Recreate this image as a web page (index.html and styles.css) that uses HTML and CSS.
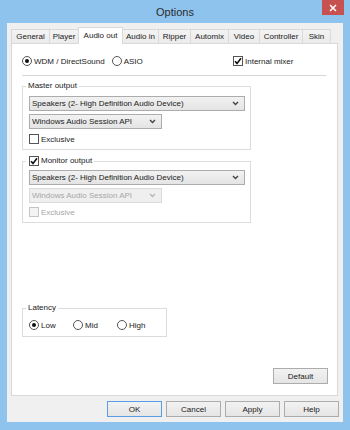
FILE: index.html
```html
<!DOCTYPE html>
<html lang="en">
<head>
    <meta charset="UTF-8">
    <title>Options</title>
    <link rel="stylesheet" href="styles.css">
</head>
<body>
<div class="window">
    <div class="titlebar">
        <span></span>
        <div class="title">Options</div>
        <div class="close">
            <svg width="8" height="8" viewBox="0 0 8 8"><path d="M1 1L7 7M7 1L1 7" stroke="#fff" stroke-width="1.5"/></svg>
        </div>
    </div>
    <div class="client">
        <div class="tabs">
            <div class="tab">General</div>
            <div class="tab">Player</div>
            <div class="tab active">Audio out</div>
            <div class="tab">Audio in</div>
            <div class="tab">Ripper</div>
            <div class="tab">Automix</div>
            <div class="tab">Video</div>
            <div class="tab">Controller</div>
            <div class="tab">Skin</div>
        </div>
        <div class="panel">
            <div class="toprow">
                <label class="opt"><span class="radio on"></span>WDM / DirectSound</label>
                <label class="opt asio"><span class="radio"></span>ASIO</label>
                <label class="opt mixer"><span class="check"><svg width="8" height="8" viewBox="0 0 8 8"><path d="M1 4.2L3 6.4L7 1.2" fill="none" stroke="#111" stroke-width="1.6"/></svg></span>Internal mixer</label>
            </div>
            <div class="sep"></div>

            <fieldset class="group master">
                <legend>Master output</legend>
                <div class="combo wide"><span>Speakers (2- High Definition Audio Device)</span><svg width="7" height="5" viewBox="0 0 7 5"><path d="M1 1L3.5 3.5L6 1" fill="none" stroke="#444" stroke-width="1.4"/></svg></div>
                <div class="combo short"><span>Windows Audio Session API</span><svg width="7" height="5" viewBox="0 0 7 5"><path d="M1 1L3.5 3.5L6 1" fill="none" stroke="#444" stroke-width="1.4"/></svg></div>
                <label class="opt"><span class="check"></span>Exclusive</label>
            </fieldset>

            <fieldset class="group monitor">
                <legend><span class="check"><svg width="8" height="8" viewBox="0 0 8 8"><path d="M1 4.2L3 6.4L7 1.2" fill="none" stroke="#111" stroke-width="1.6"/></svg></span>Monitor output</legend>
                <div class="combo wide"><span>Speakers (2- High Definition Audio Device)</span><svg width="7" height="5" viewBox="0 0 7 5"><path d="M1 1L3.5 3.5L6 1" fill="none" stroke="#444" stroke-width="1.4"/></svg></div>
                <div class="combo short off"><span>Windows Audio Session API</span><svg width="7" height="5" viewBox="0 0 7 5"><path d="M1 1L3.5 3.5L6 1" fill="none" stroke="#b5b5b5" stroke-width="1.4"/></svg></div>
                <label class="opt off"><span class="check"></span>Exclusive</label>
            </fieldset>

            <fieldset class="group latency">
                <legend>Latency</legend>
                <div class="row">
                    <label class="opt"><span class="radio on"></span>Low</label>
                    <label class="opt"><span class="radio"></span>Mid</label>
                    <label class="opt"><span class="radio"></span>High</label>
                </div>
            </fieldset>

            <div class="btn default">Default</div>
        </div>
        <div class="buttons">
            <div class="btn primary">OK</div>
            <div class="btn">Cancel</div>
            <div class="btn">Apply</div>
            <div class="btn">Help</div>
        </div>
    </div>
</div>
</body>
</html>
```

FILE: styles.css
```css
*{
    box-sizing: border-box;
}
body{
    margin: 0;
    font: 8px "Liberation Sans", Arial, sans-serif;
    color: #1a1a1a;
}
.window{
    width: 350px;
    height: 430px;
    background-color: #8ec3ee;
}

/* title bar */
.titlebar{
    height: 23px;
    display: grid;
    grid-template-columns: 1fr auto 1fr;
}
.title{
    font-size: 11px;
    line-height: 24px;
    color: #2b2b2b;
}
.close{
    justify-self: end;
    margin-right: 6px;
    width: 22px;
    height: 15px;
    background-color: #c75050;
    display: flex;
    align-items: center;
    justify-content: center;
}

.client{
    margin: 0 7px;
    height: 399px;
    background-color: #f0f0f0;
    padding: 4px 5px 5px 4px;
    display: flex;
    flex-direction: column;
}

/* tabs */
.tabs{
    height: 16px;
    display: grid;
    grid-template-columns: 38px 29px 44px 36px 32px 38px 31px 43px 28px;
    align-items: end;
}
.tab{
    height: 14px;
    line-height: 13px;
    text-align: center;
    white-space: nowrap;
    border: 1px solid #d9d9d9;
    border-bottom: 0;
    margin-right: -1px;
    background: linear-gradient(#f3f3f3, #ebebeb);
}
.tab.active{
    height: 17px;
    line-height: 15px;
    margin-bottom: -1px;
    background: #fff;
    position: relative;
    z-index: 1;
}

.panel{
    height: 353px;
    background-color: #fff;
    border: 1px solid #d9d9d9;
    padding: 0 9px 0 10px;
    display: flex;
    flex-direction: column;
}

/* radios and checks */
.opt{
    display: flex;
    align-items: center;
    white-space: nowrap;
}
.radio, .check{
    width: 10px;
    height: 10px;
    flex: none;
    border: 1px solid #555;
    background-color: #fff;
    margin-right: 2px;
    display: flex;
    align-items: center;
    justify-content: center;
}
.radio{
    border-radius: 50%;
}
.radio.on::after{
    content: "";
    width: 4px;
    height: 4px;
    border-radius: 50%;
    background-color: #111;
}
.opt.off{
    color: #a6a6a6;
}
.opt.off .check{
    border-color: #c4c4c4;
    background-color: #f4f4f4;
}

.toprow{
    display: flex;
    align-items: center;
    height: 12px;
    margin: 11px 2px 0 0;
}
.asio{
    margin-left: 7px;
}
.mixer{
    margin-left: auto;
    width: 93px;
}
.sep{
    height: 1px;
    background-color: #d6d6d6;
    margin: 8px 2px 0 0;
}

/* group boxes */
.group{
    margin: 0;
    border: 1px solid #dcdcdc;
    padding: 5px 5px 3px 6px;
}
.group legend{
    padding: 0 2px;
    margin-left: -3px;
    line-height: 10px;
}
.group .opt{
    height: 14px;
    margin-top: 3px;
}
.master{
    width: 229px;
    margin-top: 5px;
}
.monitor{
    width: 229px;
    margin-top: 6px;
    padding-top: 4px;
}
.monitor legend{
    display: flex;
    align-items: center;
    padding-left: 3px;
}
.monitor .opt{
    margin-top: 2px;
}
.latency{
    width: 138px;
    margin-top: 80px;
    padding: 6px 5px 5px 6px;
}
.latency .row{
    display: flex;
}
.latency .opt{
    width: 44px;
    height: 12px;
    margin-top: 0;
}

/* combo boxes */
.combo{
    height: 15px;
    border: 1px solid #acacac;
    background: linear-gradient(#f2f2f2, #e4e4e4);
    display: flex;
    align-items: center;
    justify-content: space-between;
    padding: 0 5px 0 2px;
    white-space: nowrap;
}
.combo + .combo{
    margin-top: 3px;
}
.combo.wide{
    width: 216px;
}
.combo.short{
    width: 133px;
}
.combo.off{
    color: #a6a6a6;
    border-color: #d9d9d9;
    background: #efefef;
}

/* buttons */
.btn{
    width: 55px;
    height: 16px;
    border: 1px solid #acacac;
    background: linear-gradient(#f2f2f2, #e5e5e5);
    display: flex;
    align-items: center;
    justify-content: center;
}
.btn.primary{
    border-color: #569de5;
}
.default{
    align-self: flex-end;
    margin-top: 31px;
}
.buttons{
    display: flex;
    justify-content: flex-end;
    gap: 4px;
    margin: 5px -1px 0 0;
}
```
